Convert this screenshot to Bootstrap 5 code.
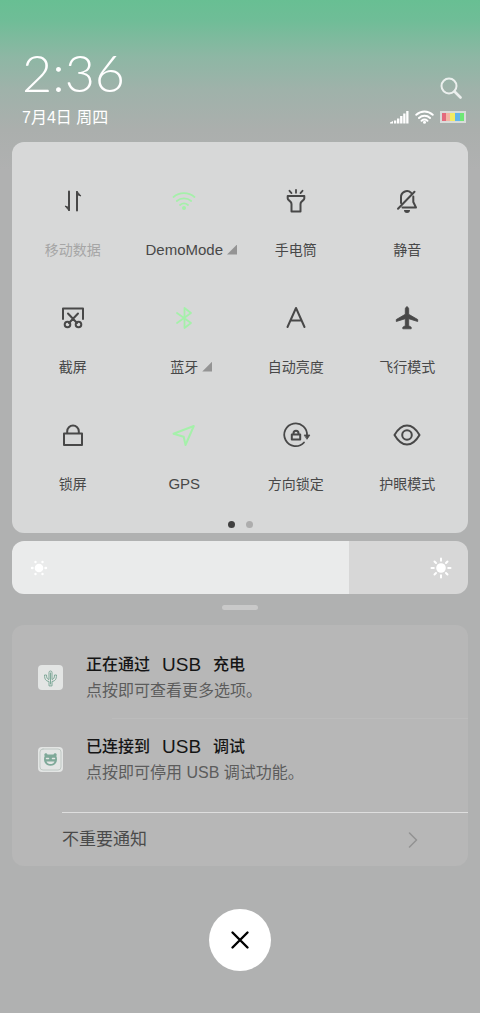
<!DOCTYPE html>
<html lang="zh-CN">
<head>
<meta charset="utf-8">
<meta name="viewport" content="width=device-width, initial-scale=1">
<title>控制中心</title>
<link href="https://cdn.jsdelivr.net/npm/bootstrap@5.3.0/dist/css/bootstrap.min.css" rel="stylesheet">
<style>
  body {
    font-family: "Liberation Sans", "Noto Sans CJK SC", sans-serif;
    color: #484848;
    min-height: 100vh;
    background: linear-gradient(#68bf93 0, #6fbd97 20px, #8db7a4 56px, #9fb2aa 90px, #abafad 130px, #b0b1b1 170px) #b0b1b1 no-repeat;
  }
  svg { display: block; fill: none; stroke: currentColor; stroke-width: 2; stroke-linecap: round; stroke-linejoin: round; }
  .hairline { stroke-width: 1; }
  .solid { fill: currentColor; stroke: none; }
  .shade { padding: 44px 12px 40px; }
  .top-line { padding: 0 2px 0 10px; }
  .clock { font-family: Lato, sans-serif; font-weight: 300; font-size: 52px; line-height: 56px; }
  .date { font-size: 16px; line-height: 24px; padding-top: 6px; }
  .status { gap: 6px; padding-top: 32px; }
  .status-row { gap: 6px; height: 22px; }
  .panel { border-radius: 12px; background: #d7d8d8; padding: 21px 5px 4px; margin-top: 12px; }
  .tile { height: 117px; padding: 0; border: 0; background: none; color: inherit; font-size: 14px; line-height: 20px; }
  .tile svg { margin: 0 auto 22px; width: 34px; height: 34px; }
  .tile .latin { font-size: 15px; }
  .tile.on svg { color: #a5f0aa; }
  .tile.off .name { color: #a6a6a6; }
  .more { position: absolute; left: 100%; bottom: 3px; width: 10px; height: 10px; margin-left: 4px; background: #949494; clip-path: polygon(100% 0, 100% 100%, 0 100%); }
  .pages { gap: 11px; height: 15px; padding-top: 7px; }
  .pages span { width: 7px; height: 7px; border-radius: 50%; background: #adadad; }
  .pages .current { background: #404040; }
  .bright { margin-top: 8px; color: #fff; }
  .bright input {
    appearance: none; display: block; width: 100%; height: 53px; margin: 0; border-radius: 12px;
    background: linear-gradient(90deg, #eaebeb var(--level), #d7d7d7 var(--level));
  }
  .bright input::-webkit-slider-thumb { appearance: none; width: 2px; height: 53px; background: transparent; }
  .bright svg { position: absolute; top: 50%; transform: translateY(-50%); pointer-events: none; }
  .bright .low { left: 16px; }
  .bright .high { right: 16px; }
  .handle { width: 36px; height: 5px; border-radius: 3px; background: #c9c9c9; margin: 11px auto 15px; }
  .notes { border-radius: 12px; background: #b7b7b7; }
  .note { padding: 27px 26px 14px; gap: 23px; }
  .note-last { padding-top: 15px; padding-bottom: 26px; }
  .note h2 { font-size: 16px; line-height: 26px; font-weight: 500; color: #151515; gap: 12px; margin: 0; }
  .note h2 span { font-size: 19px; }
  .note p { font-size: 16px; line-height: 26px; margin: 0; color: #5c5c5c; }
  .app { width: 25px; height: 25px; border-radius: 4px; background: #e3e5e4; color: #7fa999; margin-top: 13px; }
  .thin { height: 1px; margin-left: 100px; background: #bcbcbc; }
  .minor { margin-left: 50px; border-top: 1px solid #dedede; padding: 14px 48px 14px 0; font-size: 17px; line-height: 25px; color: #4a4a4a; text-decoration: none; }
  .minor svg { color: #929292; }
  .close-all { width: 62px; height: 62px; border: 0; border-radius: 50%; background: #fff; color: #000; margin-top: 43px; }
</style>
</head>
<body>
<main class="shade">
  <header class="top-line d-flex justify-content-between text-white">
    <div>
      <div class="clock">2:36</div>
      <div class="date">7月4日 周四</div>
    </div>
    <div class="status d-flex flex-column align-items-end">
      <a href="#" class="text-white pe-1" aria-label="搜索">
        <svg width="22" height="24" viewBox="0 0 22 24" opacity=".8"><circle cx="9" cy="10" r="7.5"/><path d="M14.500 15.500l6 6" stroke-width="2.600"/></svg>
      </a>
      <div class="status-row d-flex align-items-center">
        <svg class="solid" width="19" height="14" viewBox="0 0 19 14"><path d="M0 13.500v-1l3-1.500v2.500zM4 10.500h2.300v3H4zM7 8.500h2.400v5H7zM10.100 6h2.400v7.500h-2.400zM13.200 3.500h2.300v10h-2.300zM16.200 1h2.300v12.500h-2.300z"/></svg>
        <svg width="19" height="14" viewBox="0 0 19 14"><path d="M1.300 4.800a12 12 0 0 1 16.400 0M4 8a8 8 0 0 1 11 0M6.600 10.800a4.500 4.500 0 0 1 5.800 0"/><circle class="solid" cx="9.500" cy="12.300" r="1.500"/></svg>
        <svg class="solid" width="26" height="12" viewBox="0 0 26 12"><path fill="#d8dcda" d="M0 0h26v12H0z"/><path fill="#e36a7d" d="M2 2h4v8H2z"/><path fill="#f4b5a4" d="M6 2h4v8H6z"/><path fill="#f4ec62" d="M10 2h5v8h-5z"/><path fill="#63b7ea" d="M15 2h5v8h-5z"/><path fill="#6ee876" d="M20 2h4v8h-4z"/></svg>
      </div>
    </div>
  </header>

  <section class="panel">
    <div class="row row-cols-4 g-0">
      <button class="col tile off"><svg viewBox="0 0 34 34"><path d="M13 7.500v18.500M21 26.500V8"/><path d="M13 26.500l-4-4.500 4 1.500zM21 7.500l4 4.500-4-1.500z" fill="currentColor" stroke-width="1"/></svg><span class="name">移动数据</span></button>
      <button class="col tile on"><svg viewBox="0 0 34 34"><path d="M6.500 13a16 16 0 0 1 21 0M9.800 17a11 11 0 0 1 14.400 0M13 21a6.500 6.500 0 0 1 8 0" stroke-width="1.800"/><circle class="solid" cx="17" cy="24" r="2"/></svg><span class="latin position-relative">DemoMode<i class="more"></i></span></button>
      <button class="col tile"><svg viewBox="0 0 34 34"><path d="M8.700 12h16.600v2.500c0 2-3.800 2.500-3.800 5.500v7.500h-9V20c0-3-3.800-3.500-3.800-5.500z"/><path d="M17 5.800v3M10.500 6.800l2 2.300M23.500 6.800l-2 2.300" stroke-width="1.800"/></svg><span>手电筒</span></button>
      <button class="col tile"><svg viewBox="0 0 34 34"><path d="M11 19v-5.500a6 6 0 0 1 10-4.800M23.300 12.500V18l2.700 5.500H12.500M8 24.800L24.500 7.800"/><path class="solid" d="M14 26h6a3 3 0 0 1-6 0z"/></svg><span>静音</span></button>
      <button class="col tile"><svg viewBox="0 0 34 34"><path d="M7 18V7.500h20V18M12 12.500l9 9.500M22 12.500L13 22"/><circle cx="11.500" cy="23.500" r="2.800"/><circle cx="22.500" cy="23.500" r="2.800"/></svg><span>截屏</span></button>
      <button class="col tile on"><svg viewBox="0 0 34 34"><path d="M10 12l14 10-6.500 5V7l6.500 5L10 22" stroke-width="1.800"/></svg><span class="position-relative">蓝牙<i class="more"></i></span></button>
      <button class="col tile"><svg viewBox="0 0 34 34"><path d="M8.500 26L17 7l8.500 19M11.500 19.500h11"/></svg><span>自动亮度</span></button>
      <button class="col tile"><svg viewBox="0 0 34 34"><path d="M17 6c1.300 0 1.700 1 1.700 2.300v5l9 5.200v2l-9-2.800v7l2.500 1.500v1.600h-8.400v-1.600l2.500-1.500v-7l-9 2.800v-2l9-5.200v-5C15.300 7 15.700 6 17 6z" fill="currentColor" stroke-width=".8"/></svg><span>飞行模式</span></button>
      <button class="col tile"><svg viewBox="0 0 34 34"><path d="M8 15.500h18v11.500H8zM11.200 15.300v-2a5.800 5.800 0 0 1 11.600 0v2"/></svg><span>锁屏</span></button>
      <button class="col tile on"><svg viewBox="0 0 34 34"><path d="M6.500 15.800L26.800 8 18.500 27l-1.800-8.200z"/></svg><span class="latin">GPS</span></button>
      <button class="col tile"><svg viewBox="0 0 34 34"><path d="M25 24.500a11.400 11.400 0 1 1 3-6.500" stroke-width="1.800"/><path d="M25.500 17h5.400l-2.700 4z" fill="currentColor" stroke-width=".8"/><path d="M12.800 16.500h8.400v5h-8.400zM14.500 16.300v-1a2.500 2.500 0 0 1 5 0v1"/></svg><span>方向锁定</span></button>
      <button class="col tile"><svg viewBox="0 0 34 34"><path d="M4.500 17C8 11 12 7.500 17 7.500S26 11 29.500 17C26 23 22 26.500 17 26.500S8 23 4.500 17z"/><circle cx="17" cy="17" r="4.800"/></svg><span>护眼模式</span></button>
    </div>
    <div class="pages d-flex justify-content-center"><span class="current"></span><span></span></div>
  </section>

  <div class="bright position-relative">
    <input type="range" min="0" max="100" value="74" aria-label="亮度" style="--level:74%">
    <svg class="low" width="22" height="22" viewBox="0 0 22 22"><circle class="solid" cx="11" cy="11" r="4.300"/><path d="M4 11h.5M17.500 11h.5M7.500 5v.1M14.500 5v.1M7.500 17v-.1M14.500 17v-.1" stroke-width="2.400"/></svg>
    <svg class="high" width="22" height="22" viewBox="0 0 22 22"><circle class="solid" cx="11" cy="11" r="4.800"/><path d="M1.500 11h2.300M18.200 11h2.300M11 1.500v2.300M11 18.200v2.300M4.500 4.500l1.500 1.500M16 16l1.500 1.500M4.500 17.500L6 16M16 6l1.500-1.500"/></svg>
  </div>
  <div class="handle"></div>

  <section class="notes">
    <article class="note d-flex">
      <div class="app d-flex align-items-center justify-content-center"><svg class="hairline" width="17" height="18" viewBox="0 0 17 18"><path d="M7 16.500v-4c-3-.5-4.500-2-4.500-6.500h2c0 3 .8 4 2.500 4.500V3.500a1.500 1.500 0 0 1 3 0v7c1.700-.5 2.500-1.500 2.500-4.500h2c0 4.500-1.500 6-4.500 6.500v4zM8.500 4v11"/></svg></div>
      <div>
        <h2 class="d-flex">正在通过 <span>USB</span> 充电</h2>
        <p>点按即可查看更多选项。</p>
      </div>
    </article>
    <div class="thin"></div>
    <article class="note note-last d-flex">
      <div class="app d-flex align-items-center justify-content-center"><svg class="hairline" width="23" height="23" viewBox="0 0 23 23"><rect x="1" y="1" width="21" height="21" rx="3" stroke="#c0c9c5"/><path class="solid" d="M6 5.500c1-.6 2 0 2.500 1h6c.5-1 1.500-1.600 2.500-1 .9.600.8 1.800.3 2.500 1 2 .9 5-.2 6.800-1.200 2-3 2.900-5.600 2.900s-4.400-.9-5.600-2.900C4.800 13 4.700 10 5.700 8c-.5-.7-.6-1.900.3-2.500z"/><path d="M7.500 10.500h2M13.500 10.500h2" stroke="#e3e5e4" stroke-width="1.500"/><path d="M7.500 13.500h8c-.5 1.700-2 2.500-4 2.500s-3.500-.8-4-2.500z" fill="#e3e5e4" stroke="none"/></svg></div>
      <div>
        <h2 class="d-flex">已连接到 <span>USB</span> 调试</h2>
        <p>点按即可停用 USB 调试功能。</p>
      </div>
    </article>
    <a href="#" class="minor d-flex align-items-center justify-content-between">不重要通知
      <svg width="14" height="18" viewBox="0 0 14 18"><path stroke-width="1.500" d="M3.500 2l7 7-7 7"/></svg>
    </a>
  </section>

  <button class="close-all d-flex align-items-center justify-content-center mx-auto" aria-label="关闭">
    <svg width="20" height="20" viewBox="0 0 20 20"><path stroke-width="2.400" d="M2.500 2.500l15 15M17.500 2.500l-15 15"/></svg>
  </button>
</main>
<script src="https://cdn.jsdelivr.net/npm/bootstrap@5.3.0/dist/js/bootstrap.bundle.min.js"></script>
</body>
</html>
